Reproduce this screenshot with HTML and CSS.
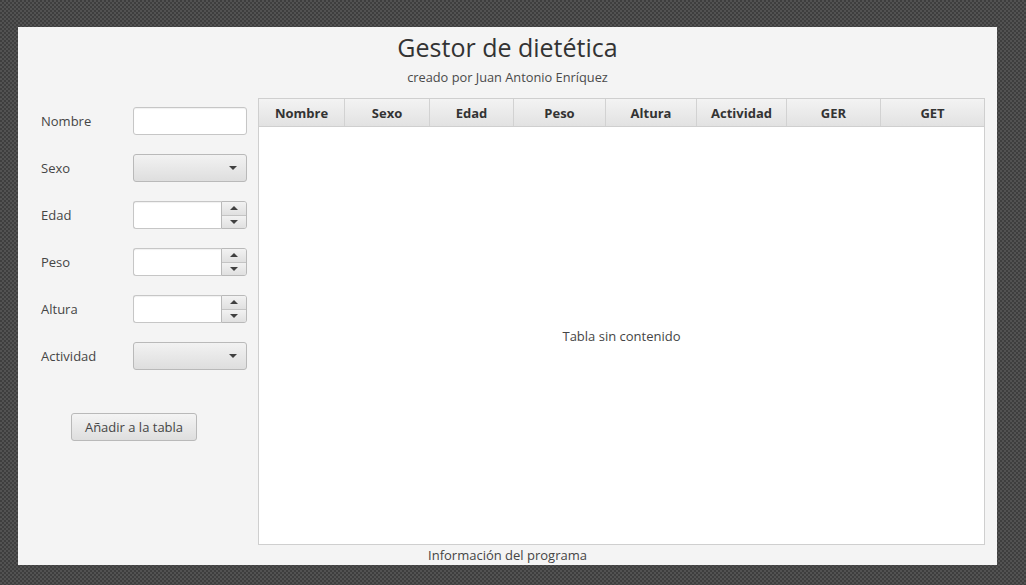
FILE: index.html
```html
<!DOCTYPE html>
<html lang="es">
<head>
<meta charset="utf-8">
<title>Gestor de dietética</title>
<link rel="stylesheet" href="styles.css">
</head>
<body>
<div class="window">
  <header class="header">
    <h1 class="title">Gestor de dietética</h1>
    <p class="subtitle">creado por Juan Antonio Enríquez</p>
  </header>
  <main class="main">
    <section class="form-col">
      <div class="form">
        <label class="label">Nombre</label>
        <div class="textfield"></div>

        <label class="label">Sexo</label>
        <div class="combo"><span class="arrow-down"></span></div>

        <label class="label">Edad</label>
        <div class="spinner"><div class="spin-field"></div><div class="spin-btns"><span class="spin-btn"><span class="arrow-up"></span></span><span class="spin-btn"><span class="arrow-down"></span></span></div></div>

        <label class="label">Peso</label>
        <div class="spinner"><div class="spin-field"></div><div class="spin-btns"><span class="spin-btn"><span class="arrow-up"></span></span><span class="spin-btn"><span class="arrow-down"></span></span></div></div>

        <label class="label">Altura</label>
        <div class="spinner"><div class="spin-field"></div><div class="spin-btns"><span class="spin-btn"><span class="arrow-up"></span></span><span class="spin-btn"><span class="arrow-down"></span></span></div></div>

        <label class="label">Actividad</label>
        <div class="combo"><span class="arrow-down"></span></div>
      </div>
      <button class="btn" type="button">Añadir a la tabla</button>
    </section>
    <section class="table">
      <div class="thead">
        <div class="th">Nombre</div>
        <div class="th">Sexo</div>
        <div class="th">Edad</div>
        <div class="th">Peso</div>
        <div class="th">Altura</div>
        <div class="th">Actividad</div>
        <div class="th">GER</div>
        <div class="th">GET</div>
      </div>
      <div class="tbody">Tabla sin contenido</div>
    </section>
  </main>
  <footer class="footer">Información del programa</footer>
</div>
</body>
</html>
```
FILE: styles.css
```css
* { box-sizing: border-box; }

html, body {
  margin: 0;
  height: 100%;
}

body {
  background: repeating-conic-gradient(#525252 0 25%, #3e3e3e 0 50%) 0 0 / 4px 4px;
  font-family: "Open Sans", "Noto Sans", sans-serif;
  color: #333;
  overflow: hidden;
}

.window {
  width: 979px;
  height: 538px;
  margin: 27px 0 0 18px;
  background: #f4f4f4;
  display: flex;
  flex-direction: column;
}

.header {
  text-align: center;
  padding-top: 5px;
}

.title {
  margin: 0;
  font-size: 25px;
  font-weight: 400;
  line-height: 30px;
  color: #333;
}

.subtitle {
  margin: 7px 0 0;
  font-size: 12.8px;
  line-height: 16px;
  color: #4a4a4a;
}

.main {
  display: flex;
  margin-top: 13px;
  height: 447px;
}

.form-col {
  width: 240px;
  padding: 9px 0 0 23px;
  display: flex;
  flex-direction: column;
}

.form {
  display: grid;
  grid-template-columns: 92px 114px;
  grid-auto-rows: 28px;
  row-gap: 19px;
  align-items: center;
}

.label {
  font-size: 13px;
  color: #454545;
}

.textfield,
.spin-field {
  height: 28px;
  background: #fff;
  border: 1px solid #c6c6c6;
  border-radius: 3px;
  box-shadow: inset 0 1px 1px rgba(0,0,0,0.06);
}

.combo {
  height: 28px;
  border: 1px solid #b9b9b9;
  border-radius: 3px;
  background: linear-gradient(#f2f2f2, #dedede);
  display: flex;
  align-items: center;
  justify-content: flex-end;
  padding-right: 9px;
}

.arrow-down {
  width: 0;
  height: 0;
  border-left: 4px solid transparent;
  border-right: 4px solid transparent;
  border-top: 4px solid #404040;
}

.arrow-up {
  width: 0;
  height: 0;
  border-left: 4px solid transparent;
  border-right: 4px solid transparent;
  border-bottom: 4px solid #404040;
}

.spinner {
  height: 28px;
  display: flex;
}

.spin-field {
  flex: 1;
  border-radius: 3px 0 0 3px;
  border-right: none;
}

.spin-btns {
  width: 26px;
  display: flex;
  flex-direction: column;
  border: 1px solid #b9b9b9;
  border-radius: 0 3px 3px 0;
  overflow: hidden;
}

.spin-btn {
  flex: 1;
  display: flex;
  align-items: center;
  justify-content: center;
  background: linear-gradient(#f2f2f2, #e0e0e0);
}

.spin-btn + .spin-btn {
  border-top: 1px solid #c4c4c4;
}

.btn {
  align-self: flex-start;
  margin: 43px 0 0 30px;
  width: 126px;
  height: 28px;
  font-family: inherit;
  font-size: 13px;
  color: #454545;
  border: 1px solid #b9b9b9;
  border-radius: 3px;
  background: linear-gradient(#f4f4f4, #dedede);
  padding: 0;
}

.table {
  width: 727px;
  border: 1px solid #cfcfcf;
  background: #fff;
  display: flex;
  flex-direction: column;
}

.thead {
  display: grid;
  grid-template-columns: 86px 85px 84px 92px 91px 90px 94px 103px;
  height: 28px;
  background: linear-gradient(#f3f3f3, #e2e2e2);
  border-bottom: 1px solid #cfcfcf;
}

.th {
  display: flex;
  align-items: center;
  justify-content: center;
  font-size: 13px;
  font-weight: 700;
  color: #333;
  border-right: 1px solid #d2d2d2;
}

.th:last-child {
  border-right: none;
}

.tbody {
  flex: 1;
  display: flex;
  align-items: center;
  justify-content: center;
  font-size: 13px;
  color: #454545;
}

.footer {
  height: 20px;
  line-height: 20px;
  text-align: center;
  font-size: 13px;
  color: #454545;
}
```
